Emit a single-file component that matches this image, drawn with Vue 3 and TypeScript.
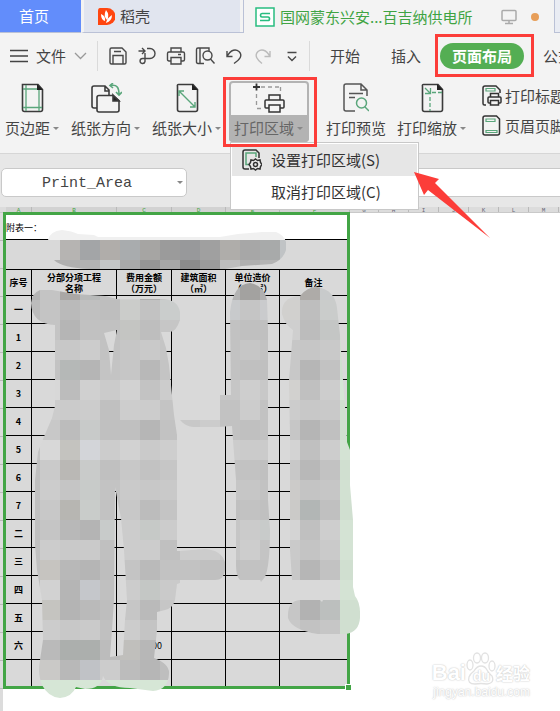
<script setup lang="ts">
interface ColumnHead {
  name: string
  width: number
  selected: boolean
}

interface MosaicCell {
  x: number
  y: number
  fill: string
}

const columns: ColumnHead[] = [
  { name: 'A', width: 26, selected: true },
  { name: 'B', width: 85, selected: true },
  { name: 'C', width: 55, selected: true },
  { name: 'D', width: 54, selected: true },
  { name: 'E', width: 54, selected: true },
  { name: 'F', width: 70, selected: true },
  { name: 'G', width: 29, selected: false },
  { name: 'H', width: 30, selected: false },
  { name: 'I', width: 30, selected: false },
  { name: 'J', width: 30, selected: false },
  { name: 'K', width: 30, selected: false },
  { name: 'L', width: 30, selected: false },
  { name: 'M', width: 30, selected: false },
]

const rowNames: string[] = ['一', '1', '2', '3', '4', '5', '6', '7', '二', '三', '四', '五', '六', '']

/* Each line is one 20px band of the mosaic, from x = 20; two digits stand for a grey. */
const bands: string[] = [
  'F0 F0 F0 F0 F0 F0 F0 F0 F0 F0 F0 F0 F0 F0 F0 F0 F0',
  'D8 D8 B6B4B2 A3A5A7 B0ADAA A9ACAE A6A5A3 9B 98999B A0 AFADAA A7 A8AAAA C0C3C5 C0 C0 C0',
  'B0 B0 AF B2 C4C7C7 A8 95 A7 8B 9B BE AF B4 C0 C0 C0 C0',
  'B4 C4 AAA7A5 B8BABA C0 D0 AE C4 C4 C4 B3 A3A2A0 B0 D0 AEABA8 C8CACB C8',
  'BC C4 BA C0 BE CBCCCA C2 CACDCC C4 C4 C8CACC C5 CACBCD D1D0CE BE CACCCB C8',
  'C0 C4 B5 C1 C1 C4C5C2 BE C6 C4 C4 C2 C0 C0 CF BC C4C6C5 D0DFD0',
  'C0 C8 C8 CC C2 C6 C9 C5 C4 C4 C2 C6 C2 C7 C6 C9 D0DFD0',
  'C0 C3 B5B8B7 B5 C4 C6 B8 C4 C4 C4 C2 C0 C0 C8 B6 C2 D0DFD0',
  'C0 D8 BC D0 CB D2 C3 CC C4 C4 C6 CE C8 D2D1CF C0 CD D6E6D6',
  'C0 CC CB CC C0 CD CC C4 C8 C8 C2 CC C2 CC C8 C9 D0DFD0',
  'C0 C8 BC C8CAC9 C0 C0 B6 C2 C8 CC C2 C0 C2 C6 B5 C0 D0DFD0',
  'C4 D8 C4C3BF D3D5D9 CC D2 CA CE C8 C8 CC CB CB D3 C0 CD D4E3D4',
  'C0 CA BAB8B5 C9CBCA C0 C8 C2 C6 C8 C8 C2 C2 C0 C8 B8 C2 D0DFD0',
  'C0 CC C5 C8CBC9 C3 CA C8 C9 C8 C8 C6 C6 C2 CCCBC9 C4 C6 D2E1D2',
  'C0 C8 B7B6B2 C9CCCA C2 C8 BC C4 C8 C8 C0 C2 C0 CBCAC8 B2B6B5 C0 D0DFD0',
  'C0 C5 B8 B4 C8CBCA CC C6C9C7 CC C8 C8 C6 CB C8CBCA D4 C0 CE D4E3D4',
  'C0 CC C9 CA C0 CC CC C0 CC CC C6 CD C4 CA C4 CA D4E3D4',
  'C0 C6C4C0 B8 B5 BE C4 BA C2 C2 C0 C0 C2 C2 C8 B6 C2 D0DFD0',
  'C0 D2 B5 C5C7CB C0 CC C4C7C5 CA C6 C6 C6 C6 C6 C6 C6 C6 D4E3D4',
  'C0 C5C4C0 B4 BA BE C6 BA C6 C6 C6 C6 C6 C6 C6 B2 BCBFBE D0DFD0',
  'C0 CC C8 CA C0 CC C4 C6 C6 C6 C6 C6 C6 C8 C2 C6 D0DFD0',
  'C0 BA ACAFAD ACAFAD BC C0BFBC B7 C0 C0 C0 C0 C0 C0 C0 C0 C0 D0DFD0',
  'C0 CAC9C7 B8 C0C2C6 CC BC B6 BE C0 C0 C0 C0 C0 C0 C0 C0 D0DFD0',
  'D6E6D6 D6E6D6 D6E6D6 D6E6D6 D6E6D6 D6E6D6 D6E6D6 D6E6D6 D6E6D6',
]

const cells: MosaicCell[] = bands.flatMap((line, row) =>
  line.split(' ').map((tone, col) => ({
    x: 20 + col * 20,
    y: 220 + row * 20,
    fill: '#' + (tone.length === 2 ? tone.repeat(3) : tone),
  })),
)
</script>

<template>
  <div class="app">
    <nav class="tabs">
      <button class="tab home">首页</button>
      <button class="tab store">
        <svg width="17" height="17" viewBox="0 0 17 17"><path d="M2 0h7a8 8 0 0 1 0 17H0V3Q0 0 2 0Z" fill="#ff4610" /><path d="M8 2Q12 7 9 12Q5 8 8 2ZM3 6Q8 8 7 13Q3 12 3 6ZM14 7Q14 13 8 15Q9 10 14 7Z" fill="#fff" /></svg>
        稻壳
      </button>
      <button class="tab current">
        <svg width="20" height="20" viewBox="0 0 20 20" fill="none" stroke="#28bd80"><rect x="1" y="1" width="18" height="18" stroke-width="1.500" fill="#fff" /><path d="M15 6.500H7Q5.500 6.500 5.500 8.200T7 10h6q1.500 0 1.500 1.800T13 13.500H5" stroke-width="1.700" /></svg>
        <span class="title">国网蒙东兴安...百吉纳供电所</span>
        <svg class="screen" width="16" height="16" viewBox="0 0 16 16" fill="none" stroke="#aaa" stroke-width="1.500"><rect x="1" y="1.500" width="14" height="10" rx="1" /><path d="M8 12v2.500M4 14.500h8" /></svg>
        <i class="dot"></i>
      </button>
      <span class="tab rest"></span>
    </nav>

    <div class="menubar">
      <button class="file">
        <svg width="18" height="14" viewBox="0 0 18 14" stroke="#444" stroke-width="1.400"><path d="M0 1.500h18M0 7h18M0 12.500h18" /></svg>
        <span>文件</span>
        <svg width="13" height="8" viewBox="0 0 13 8" fill="none" stroke="#999" stroke-width="1.300"><path d="M1 1l5.500 5.500L12 1" /></svg>
      </button>
      <div class="quick">
        <button aria-label="保存"><svg width="20" height="20" viewBox="0 0 20 20"><path d="M3.500 2h10.500l4 4v10.500q0 1.500-1.500 1.500h-13Q2 18 2 16.500v-13Q2 2 3.500 2ZM5 18V9.500h10V18M6 5.500h7" /></svg></button>
        <button aria-label="输出"><svg width="20" height="20" viewBox="0 0 20 20"><path d="M1.500 5h6M5 2l3 3-3 3M10 2.500h3a5 5 0 0 1 0 10H5.500a2.500 2.500 0 1 0 2.500 3V7" /></svg></button>
        <button aria-label="打印"><svg width="20" height="20" viewBox="0 0 20 20"><path d="M5 6V2h10v4M5 15H3q-1.500 0-1.500-1.500v-6Q1.500 6 3 6h14q1.500 0 1.500 1.500v6Q18.500 15 17 15h-2M5 11.500h10V18H5ZM12 8.500h3" /></svg></button>
        <button aria-label="打印预览"><svg width="20" height="20" viewBox="0 0 20 20"><path d="M9 17.500H3q-1.500 0-1.500-1.500V3.500Q1.500 2 3 2h11v3M5 2v15.500" /><circle cx="12.500" cy="9.500" r="4.500" /><path d="m15.500 13 4 4.500" /></svg></button>
        <button aria-label="撤销"><svg width="20" height="20" viewBox="0 0 20 20"><path d="M3 5v5.500h5.500M3 10.500C7 3 12 3 15 5.500c4 4 1 8-5 12" /></svg></button>
        <button class="off" aria-label="恢复"><svg width="20" height="20" viewBox="0 0 20 20"><path d="M17 5v5.500h-5.500M17 10.500C13 3 8 3 5 5.500c-4 4-1 8 4 12" /></svg></button>
        <button aria-label="更多"><svg width="20" height="20" viewBox="0 0 20 20"><path d="M5.500 6.500h9M6 10.500l4 4 4-4" /></svg></button>
      </div>
      <div class="menus">
        <button>开始</button>
        <button>插入</button>
        <span class="marked"><button class="pill">页面布局</button><i class="frame around-pill"></i></span>
        <button>公式</button>
      </div>
    </div>

    <div class="ribbon">
      <button class="tool">
        <span class="pic"><svg width="24" height="30" viewBox="0 0 24 30" fill="none"><path d="M2.500 1.500H18l4.500 5v20q0 2-2 2h-16q-2 0-2-2v-25Z" stroke="#3b3b3b" stroke-width="1.600" /><path d="M17 1l6 6h-6Z" fill="#222" /><path d="M6 2v26M19 7v21M3 6h14M3 24.500h19" stroke="#5aa67b" stroke-width="1.300" /></svg></span>
        <span class="label">页边距<i class="caret"></i></span>
      </button>
      <button class="tool">
        <span class="pic"><svg width="32" height="30" viewBox="0 0 32 30" fill="none" stroke="#3b3b3b" stroke-width="1.600"><path d="M7 25H4q-2 0-2-2V5q0-2 2-2h11l4 4v5M15 3v5h4" /><path d="M9 12.500h14l6 5V27q0 2-2 2H9q-2 0-2-2V14.500q0-2 2-2Z" /><path d="M23 12l6 6h-6Z" fill="#222" /><path d="M21 2.500c6-1 8 2 8 9M23 0l-3 2.500L23 5M26 9l3 3 3-3" stroke="#5aa67b" /></svg></span>
        <span class="label">纸张方向<i class="caret"></i></span>
      </button>
      <button class="tool">
        <span class="pic"><svg width="24" height="30" viewBox="0 0 24 30" fill="none"><path d="M3.500 1.500H18l4.500 5v20q0 2-2 2h-16q-2 0-2-2v-23Q2 1.500 3.500 1.500Z" stroke="#3b3b3b" stroke-width="1.600" /><path d="M17 1l6 6h-6Z" fill="#222" /><path d="M4 8l16 16M4 13V8h5M20 19v5h-5" stroke="#5aa67b" stroke-width="1.400" /></svg></span>
        <span class="label">纸张大小<i class="caret"></i></span>
      </button>
      <div class="area-wrap">
        <button class="tool area" aria-expanded="true">
          <span class="pic"><svg width="32" height="30" viewBox="0 0 32 30" fill="none" stroke="#333" stroke-width="1.500"><path d="M8 4h20M3.500 11v14M27.500 4v6M4 25.500h6" stroke="#999" stroke-dasharray="4 3" stroke-width="1.300" /><path d="M0 4h7M3.500 .500v7" stroke-width="1.800" /><path d="M16 17v-5h11v5M16 25h-3q-1 0-1-1v-6q0-1 1-1h17q1 0 1 1v6q0 1-1 1h-3M16 22h11v7H16Z" /></svg></span>
          <span class="label">打印区域<i class="caret"></i></span>
        </button>
        <div class="popup" role="menu">
          <button class="choice active" role="menuitem">
            <svg width="20" height="22" viewBox="0 0 20 22" fill="none" stroke="#333" stroke-width="1.500"><path d="M7 20H3q-2 0-2-2V3q0-2 2-2h11l3 3v5" /><path d="M8 15.500H4V4h10v4" stroke="#5aa67b" /><path d="M13.500 10l2 1.500 2.500-.5.500 2.500 1.500 2-1.500 2-.5 2.500-2.500-.5-2 1.500-2-1.500-2.500.5-.5-2.500L7 15.500l1.500-2 .5-2.500 2.500.5Z" fill="#eee" /><circle cx="13.500" cy="15.500" r="2" /></svg>
            设置打印区域(S)
          </button>
          <button class="choice" role="menuitem">取消打印区域(C)</button>
        </div>
        <i class="frame around-area"></i>
        <svg class="pointer" width="78" height="68" viewBox="0 0 78 68"><path d="M1 1 26 8 22 12 77 67 15 19 11 24Z" fill="#fc3d39" /></svg>
      </div>
      <button class="tool preview">
        <span class="pic"><svg width="26" height="30" viewBox="0 0 26 30" fill="none" stroke="#555" stroke-width="1.500"><path d="M12 28H3q-2 0-2-2V3q0-2 2-2h15l6 6v6M18 1v6h6M6 10.500h14M6 14.500h6" /><g stroke="#5aa67b"><circle cx="18.500" cy="20" r="5" /><path d="M22 24l4 4" /></g></svg></span>
        <span class="label">打印预览</span>
      </button>
      <button class="tool">
        <span class="pic"><svg width="24" height="30" viewBox="0 0 24 30" fill="none"><path d="M3.500 1.500H18l4.500 5v20q0 2-2 2h-16q-2 0-2-2v-23Q2 1.500 3.500 1.500Z" stroke="#3b3b3b" stroke-width="1.600" /><path d="M17 1l6 6h-6Z" fill="#222" /><path d="M10 14v14M12 9.500h10" stroke="#5aa67b" stroke-dasharray="4 2" stroke-width="1.300" /><path d="M5 5l5 5M10.500 5v5.500H5" stroke="#5aa67b" stroke-width="1.300" /></svg></span>
        <span class="label">打印缩放<i class="caret"></i></span>
      </button>
      <div class="stack">
        <button class="line">
          <svg width="20" height="21" viewBox="0 0 20 21" fill="none" stroke="#333" stroke-width="1.500"><path d="M4 20H2.500Q1 20 1 18.500V3q0-2 2-2h11l4 4v3" /><path d="M4 3.500h9v2.500H4Z" stroke="#5aa67b" stroke-width="1.200" /><path d="M8.500 12V8.500h8V12M8 18H7q-1 0-1-1v-4q0-1 1-1h11q1 0 1 1v4q0 1-1 1h-1M8.500 15.500h8V20h-8Z" /></svg>
          打印标题
        </button>
        <button class="line">
          <svg width="20" height="21" viewBox="0 0 20 21" fill="none" stroke="#333" stroke-width="1.500"><path d="M3 1h11.500l3 3v14q0 2-2 2H3q-2 0-2-2V3q0-2 2-2Z" /><path d="M4 4h9v2.500H4ZM4 15.500h11v2H4Z" stroke="#5aa67b" stroke-width="1.200" /></svg>
          页眉页脚
        </button>
      </div>
    </div>

    <div class="formula">
      <label class="namebox"><input type="text" value="Print_Area" aria-label="名称框" /><i class="caret"></i></label>
      <input class="entry" type="text" aria-label="编辑栏" />
    </div>

    <div class="heads">
      <span v-for="c in columns" :key="c.name" :class="{ selected: c.selected }" :style="{ width: c.width + 'px' }">{{ c.name }}</span>
    </div>

    <main class="sheet">
      <div class="row-heads"></div>
      <div class="selection">
        <table>
          <colgroup><col class="c-a" /><col class="c-b" /><col class="c-c" /><col class="c-d" /><col class="c-d" /><col class="c-f" /></colgroup>
          <tbody>
            <tr class="note"><td colspan="6">附表一：</td></tr>
            <tr class="heading"><td colspan="6"></td></tr>
            <tr class="names">
              <th>序号</th>
              <th>分部分项工程<br />名称</th>
              <th>费用金额<br />（万元）</th>
              <th>建筑面积<br />（㎡）</th>
              <th>单位造价<br />（元/㎡）</th>
              <th>备注</th>
            </tr>
            <tr v-for="(name, i) in rowNames" :key="i" class="item">
              <th>{{ name }}</th>
              <td></td>
              <td class="sum">{{ name === '六' ? '00' : '' }}</td>
              <td v-if="i === 0" rowspan="9"></td>
              <td v-else-if="i > 8"></td>
              <td></td>
              <td></td>
            </tr>
          </tbody>
        </table>
        <i class="handle"></i>
      </div>

      <svg class="mosaic" width="370" height="490" viewBox="0 212 370 490" aria-hidden="true">
        <defs>
          <clipPath id="smudge">
            <path d="M48 240Q50 231 62 230Q72 231 78 234L94 235L98 237H220L238 234L262 232L276 232Q284 235 286 242V250Q283 260 272 264L242 266L225 269H90Q62 268 54 260H60V240Z" />
            <path clip-rule="evenodd" d="M31 303Q32 293 40 290H52L75 294L105 296L117 299H160Q178 299 180 312V320Q176 332 170 332H161L166 348L169 365L172 395L174 415L177 435V551H180L205 549Q221 550 225 562V570Q224 580 215 580H180V583L177 584L175 600Q173 608 165 610L157 612V630L154 658Q170 664 169 674Q168 690 153 691L130 688Q108 688 103 676Q101 689 85 689L76 687Q72 697 60 698Q48 697 42 685Q38 676 40 660L43 640L42 600L37 570L35 545V480L38 452L43 439L52 418L55 406V325Q32 324 31 303ZM117 330L104 333L109 350L111 375L114 345ZM115 487L114 600L112 630L110 657L123 655L125 620L127 600L124 550L121 518Z" />
            <path d="M230 312Q233 284 250 283Q264 285 267 300L268 330V500L270 530Q270 565 265 577L261 582L260 580H240Q236 576 236 565V480L233 440L232 426L218 427H193Q185 426 180 420H220V395H231Z" />
            <path d="M282 314Q281 297 300 296Q307 287 317 287Q335 290 337 308L340 335L343 380L346 420L347 442L350 450V485L353 520V587L355 596Q361 603 360 618Q359 632 346 634H318Q292 630 288 618Q287 601 300 600H320L322 602L323 600H340V580H292L290 550V435L289 380L293 330Q285 325 282 314Z" />
          </clipPath>
        </defs>
        <g clip-path="url(#smudge)" shape-rendering="crispEdges">
          <rect v-for="(c, i) in cells" :key="i" :x="c.x" :y="c.y" width="20" height="20" :fill="c.fill" />
        </g>
      </svg>

      <div class="watermark" aria-hidden="true">
        <div class="brand">
          <span>Bai</span>
          <span class="paw">
            <svg width="30" height="33" viewBox="0 0 30 33" fill="#fff" stroke="#e2e2e2" stroke-width="1.300"><ellipse cx="4" cy="13" rx="3" ry="5" /><ellipse cx="11" cy="6" rx="3.500" ry="5" /><ellipse cx="19" cy="6" rx="3.500" ry="5" /><ellipse cx="26" cy="14" rx="3" ry="5" /><path d="M15 14q4 0 6 4t5 6q3 7-5 8-6-1-12 0-8 0-6-7 1-3 5-6 3-5 7-5Z" /></svg>
            <b>du</b>
          </span>
          <span class="cn">经验</span>
        </div>
        <div class="site">jingyan.baidu.com</div>
      </div>
    </main>
  </div>
</template>

<style>
body {
  margin: 0;
}
</style>

<style scoped>
.app {
  display: flex;
  flex-direction: column;
  min-height: 100vh;
  overflow: hidden;
  position: relative;
  background: #fff;
  color: #444;
  font: 15px/20px 'Noto Sans CJK SC', sans-serif;
  white-space: nowrap;
}
.app * {
  box-sizing: border-box;
}
button {
  border: 0;
  padding: 0;
  background: none;
  color: inherit;
  font: inherit;
  white-space: nowrap;
  flex: none;
}
svg {
  display: block;
  flex: none;
}
.tabs {
  display: flex;
  height: 33px;
  background: #f3f3f3;
}
.tab {
  display: flex;
  align-items: center;
  border-bottom: 1px solid #bac1d6;
}
.home {
  width: 81px;
  padding: 0 0 0 19px;
  background: #628dfb;
  color: #fff;
}
.store {
  width: 163px;
  padding-left: 14px;
  gap: 5px;
  border-left: 3px solid #f3f3f3;
  border-right: 1px solid #bac1d6;
  background: linear-gradient(to right, #e1e5ef 156px, #f3f3f3 156px);
}
.current {
  flex: 1;
  padding-left: 11px;
  gap: 5px;
  border-bottom: 0;
  color: #3fa443;
}
.title {
  width: 216px;
  text-align: left;
}
.dot {
  width: 8px;
  height: 8px;
  margin-left: 9px;
  border-radius: 50%;
  background: #e79e58;
}
.rest {
  width: 6px;
  border-left: 1px solid #bac1d6;
  background: #e9ecf3;
}
.menubar {
  display: flex;
  align-items: center;
  height: 46px;
  padding-left: 10px;
  background: #f3f3f3;
}
.file {
  display: flex;
  align-items: center;
  gap: 8px;
}
.quick {
  display: flex;
  gap: 9px;
  height: 30px;
  margin-left: 10px;
  padding: 0 7px 0 10px;
  align-items: center;
  border: solid #dadada;
  border-width: 0 1px;
}
.quick svg {
  fill: none;
  stroke: #484848;
  stroke-width: 1.4;
}
.quick .off svg {
  stroke: #bbb;
}
.menus {
  display: flex;
  align-items: center;
  gap: 31px;
  padding-left: 20px;
}
.marked {
  position: relative;
  margin: 0 -12px;
}
.pill {
  height: 26px;
  padding: 0 12px;
  border-radius: 13px;
  background: #54ae53;
  color: #fff;
  font-weight: 700;
}
.frame {
  position: absolute;
  z-index: 3;
  border: 3px solid #fc3d39;
  pointer-events: none;
}
.around-pill {
  inset: -9px -10px -8px -5px;
}
.ribbon {
  display: flex;
  align-items: flex-start;
  gap: 12px;
  height: 75px;
  padding: 2px 0 0 5px;
  border-bottom: 1px solid #d6d6d6;
  background: #f3f3f3;
}
.tool {
  display: flex;
  flex-direction: column;
  align-items: center;
}
.pic {
  display: flex;
  align-items: center;
  justify-content: center;
  height: 34px;
}
.label {
  display: flex;
  align-items: center;
  gap: 3px;
  height: 26px;
}
.caret {
  border: 3px solid transparent;
  border-top-color: #888;
  border-bottom: 0;
}
.area-wrap {
  position: relative;
  margin: 0 -6px 0 -4px;
}
.area {
  padding: 0 6px 1px 5px;
  border-radius: 4px;
  background: linear-gradient(#f4f4f4 34px, #b3b3b3 34px);
  box-shadow: inset 0 0 0 2px #b3b3b3;
  color: #666;
}
.around-area {
  inset: -4px -8px -5px -6px;
}
.popup {
  position: absolute;
  z-index: 2;
  top: 61px;
  left: 1px;
  display: flex;
  flex-direction: column;
  width: 189px;
  padding: 1px;
  border: 1px solid #c8c8c8;
  background: #fff;
  color: #333;
}
.choice {
  display: flex;
  align-items: center;
  gap: 9px;
  height: 32px;
  padding-left: 39px;
}
.choice.active {
  padding-left: 10px;
  background: #e6e6e6;
}
.pointer {
  position: absolute;
  z-index: 4;
  top: 90px;
  left: 184px;
}
.preview {
  margin: 0 -1px 0 11px;
}
.stack {
  display: flex;
  flex-direction: column;
  gap: 9px;
  padding: 4px 0 0 4px;
}
.line {
  display: flex;
  align-items: center;
  gap: 3px;
  height: 21px;
}
.formula {
  display: flex;
  justify-content: space-between;
  gap: 53px;
  height: 53px;
  padding: 14px 0 9px 1px;
  background: #e7e7e7;
}
.namebox {
  display: flex;
  align-items: center;
  flex: none;
  width: 186px;
  height: 29px;
  padding-right: 3px;
  border: 1px solid #c9c9c9;
  border-radius: 5px;
  background: #fff;
}
.namebox input {
  flex: 1;
  min-width: 0;
  padding: 2px 0 0 40px;
  border: 0;
  background: none;
  color: #444;
  font: 15px/20px 'Liberation Mono', monospace;
}
.entry {
  flex: 1;
  min-width: 0;
  height: 29px;
  border: 1px solid #c9c9c9;
  border-right: 0;
  background: #fff;
}
.heads {
  display: flex;
  height: 6px;
  padding-left: 6px;
  overflow: hidden;
  background: #dcdcdc;
  color: #667;
  font: 6px/7px 'Liberation Mono', monospace;
  text-align: center;
}
.heads span {
  flex: none;
  border-right: 1px solid #b9b9b9;
}
.heads .selected {
  background: #d2d2d2;
  color: #3fa443;
}
.sheet {
  position: relative;
  display: flex;
  flex: 1;
  align-items: flex-start;
  border-top: 1px solid #c9c9c9;
  margin-top: -1px;
}
.row-heads {
  align-self: stretch;
  width: 3px;
  background: repeating-linear-gradient(#dcdcdc 0 27px, #b9b9b9 27px 28px);
}
.selection {
  position: relative;
  margin-top: -1px;
  border: 3px solid #43a546;
}
table {
  table-layout: fixed;
  width: 341px;
  border-spacing: 0;
  background: #d9d9d9;
  color: #000;
  font-size: 9px;
  line-height: 11px;
}
.c-a {
  width: 26px;
}
.c-b {
  width: 85px;
}
.c-c {
  width: 55px;
}
.c-d {
  width: 54px;
}
.c-f {
  width: 67px;
}
td,
th {
  padding: 0;
  border: solid #000;
  border-width: 0 1px 1px 0;
  text-align: center;
}
td:last-child,
th:last-child {
  border-right: 0;
}
tr:last-child > * {
  border-bottom: 0;
}
.note {
  height: 25px;
  background: #fff;
}
.note td {
  text-align: left;
}
.heading {
  height: 30px;
}
.names {
  height: 26px;
}
.item {
  height: 28px;
}
.item:last-child {
  height: 26px;
}
.sum {
  padding-right: 9px;
  text-align: right;
}
.handle {
  position: absolute;
  right: -4px;
  bottom: -4px;
  width: 6px;
  height: 6px;
  border: solid #fff;
  border-width: 1px 0 0 1px;
  background: #43a546;
}
.mosaic {
  position: absolute;
  top: -1px;
  left: 0;
}
.watermark {
  position: absolute;
  right: 30px;
  bottom: 12px;
  color: #fff;
  text-shadow: 0 0 1px #ccc, 0 0 2px #ccc;
}
.brand {
  display: flex;
  align-items: flex-end;
  font: 700 22px/24px 'Liberation Sans', sans-serif;
}
.paw {
  position: relative;
}
.paw b {
  position: absolute;
  left: 7px;
  bottom: 1px;
  font-size: 14px;
  line-height: 16px;
}
.cn {
  font: 700 17px/24px 'Noto Sans CJK SC', sans-serif;
}
.site {
  font: 12px/14px 'Liberation Sans', sans-serif;
  text-align: right;
}
</style>
